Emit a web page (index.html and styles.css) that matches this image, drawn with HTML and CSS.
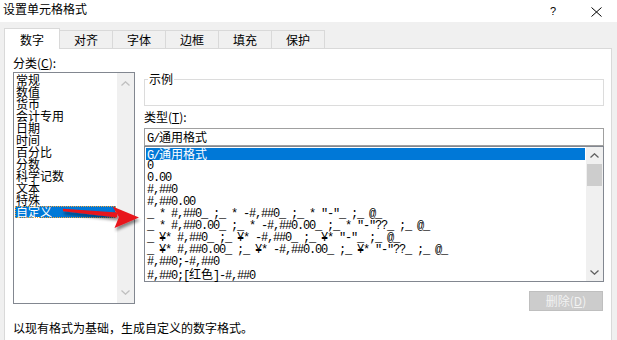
FILE: index.html
```html
<!DOCTYPE html>
<html lang="zh-CN">
<head>
<meta charset="utf-8">
<title>设置单元格格式</title>
<link rel="stylesheet" href="styles.css">
</head>
<body>
<div class="titlebar">
  <span class="title">设置单元格格式</span>
  <span class="help">?</span>
  <svg class="close" width="11" height="10" viewBox="0 0 11 10"><path d="M0.5 0.5L10.5 9.5M10.5 0.5L0.5 9.5" stroke="#000" stroke-width="1" fill="none"/></svg>
</div>
<div class="tabs">
  <div class="tab active">数字</div>
  <div class="tab">对齐</div>
  <div class="tab">字体</div>
  <div class="tab">边框</div>
  <div class="tab">填充</div>
  <div class="tab">保护</div>
</div>
<div class="panel">
  <div class="columns">
    <div class="left">
      <div class="label">分类(<u>C</u>):</div>
      <div class="listbox catlist">
        <ul class="items">
          <li>常规</li>
          <li>数值</li>
          <li>货币</li>
          <li>会计专用</li>
          <li>日期</li>
          <li>时间</li>
          <li>百分比</li>
          <li>分数</li>
          <li>科学记数</li>
          <li>文本</li>
          <li>特殊</li>
          <li class="sel focus">自定义</li>
        </ul>
        <div class="vscroll disabled">
          <svg class="chev" width="9" height="5" viewBox="0 0 9 5"><path d="M0.5 4.5L4.5 0.8L8.5 4.5" stroke="currentColor" stroke-width="1.3" fill="none"/></svg>
          <svg class="chev" width="9" height="5" viewBox="0 0 9 5"><path d="M0.5 0.5L4.5 4.2L8.5 0.5" stroke="currentColor" stroke-width="1.3" fill="none"/></svg>
        </div>
      </div>
    </div>
    <div class="right">
      <fieldset class="sample"><legend>示例</legend><div class="sample-body"></div></fieldset>
      <div class="label type-label">类型(<u>T</u>):</div>
      <div class="input"><span class="mono">G/</span>通用格式</div>
      <div class="listbox fmtlist">
        <ul class="items mono">
          <li class="sel">G/<span class="cjk">通用格式</span></li>
          <li>0</li>
          <li>0.00</li>
          <li>#,##0</li>
          <li>#,##0.00</li>
          <li>_ * #,##0_ ;_ * -#,##0_ ;_ * "-"_ ;_ @_</li>
          <li>_ * #,##0.00_ ;_ * -#,##0.00_ ;_ * "-"??_ ;_ @_</li>
          <li>_ ¥* #,##0_ ;_ ¥* -#,##0_ ;_ ¥* "-"_ ;_ @_</li>
          <li>_ ¥* #,##0.00_ ;_ ¥* -#,##0.00_ ;_ ¥* "-"??_ ;_ @_</li>
          <li>#,##0;-#,##0</li>
          <li>#,##0;[<span class="cjk">红色</span>]-#,##0</li>
        </ul>
        <div class="vscroll">
          <div class="arrowbox"><svg class="chev" width="9" height="5" viewBox="0 0 9 5"><path d="M0.5 4.5L4.5 0.8L8.5 4.5" stroke="currentColor" stroke-width="1.3" fill="none"/></svg></div>
          <div class="thumb"></div>
          <div class="track"></div>
          <div class="arrowbox"><svg class="chev" width="9" height="5" viewBox="0 0 9 5"><path d="M0.5 0.5L4.5 4.2L8.5 0.5" stroke="currentColor" stroke-width="1.3" fill="none"/></svg></div>
        </div>
      </div>
      <div class="btnrow"><button class="btn" disabled>删除(<u>D</u>)</button></div>
    </div>
  </div>
  <div class="hint">以现有格式为基础，生成自定义的数字格式。</div>
</div>
<svg class="redarrow" width="617" height="340" viewBox="0 0 617 340">
  <defs>
    <filter id="sh" x="-20%" y="-50%" width="140%" height="200%">
      <feGaussianBlur in="SourceAlpha" stdDeviation="1.6"/>
      <feOffset dx="1" dy="3" result="b"/>
      <feComponentTransfer><feFuncA type="linear" slope="0.45"/></feComponentTransfer>
      <feMerge><feMergeNode/><feMergeNode in="SourceGraphic"/></feMerge>
    </filter>
  </defs>
  <g filter="url(#sh)" fill="#e8141b">
    <polygon points="63,208.8 63,211.2 117,217.5 117.5,212.5"/>
    <polygon points="112.5,206.5 139,217.5 114.5,228 119,217"/>
  </g>
</svg>
</body>
</html>
```

FILE: styles.css
```css
* { box-sizing: border-box; }

body {
  margin: 0;
  width: 617px;
  height: 340px;
  overflow: hidden;
  background: #f0f0f0;
  font-family: "Noto Sans CJK SC", sans-serif;
  font-size: 12px;
  color: #000;
  position: relative;
}

.titlebar {
  height: 22px;
  background: #fff;
  display: flex;
  align-items: flex-start;
}
.title {
  flex: 1;
  margin: 3px 0 0 3px;
  line-height: 12px;
}
.help {
  font-family: "Liberation Sans", sans-serif;
  font-size: 11px;
  line-height: 11px;
  margin-top: 6px;
  width: 6px;
}
.close {
  margin: 7px 15px 0 35px;
}

.tabs {
  height: 26px;
  display: flex;
  align-items: flex-end;
  padding-left: 4px;
}
.tab {
  width: 54px;
  height: 18px;
  border: 1px solid #d9d9d9;
  border-bottom: none;
  margin-right: -1px;
  text-align: center;
  line-height: 14px;
  padding-top: 2px;
  background: #f0f0f0;
}
.tab.active {
  width: 56px;
  height: 21px;
  margin-bottom: -1px;
  background: #fff;
  position: relative;
  z-index: 1;
  padding-top: 4px;
}

.panel {
  margin-left: 4px;
  width: 608px;
  height: 300px;
  border: 1px solid #d9d9d9;
  background: #fff;
  padding: 7px 0 0 8px;
}

.columns {
  display: flex;
  align-items: flex-start;
  gap: 9px;
}
.left { width: 122px; }
.right { width: 460px; }

.label {
  line-height: 14px;
  height: 16px;
}
.type-label {
  margin-top: 4px;
  height: 16px;
}

.listbox {
  border: 1px solid #828790;
  display: flex;
  background: #fff;
}
.catlist { height: 232px; }
.fmtlist { height: 136px; }

.items {
  flex: 1;
  list-style: none;
  margin: 0;
  padding: 1px 1px 0 1px;
}
.items li {
  height: 12px;
  line-height: 12px;
  padding-left: 1px;
  white-space: pre;
}
.items li.sel {
  background: #0078d7;
  color: #fff;
}
.items li.focus {
  outline: 1px dotted #f2a33a;
  outline-offset: -1px;
}

.mono {
  font-family: "Liberation Mono", monospace;
  font-size: 12px;
  letter-spacing: -1.2px;
}
.cjk {
  font-family: "Noto Sans CJK SC", sans-serif;
  font-size: 12px;
  letter-spacing: 0;
}

.vscroll {
  width: 17px;
  background: #f0f0f0;
  display: flex;
  flex-direction: column;
  align-items: center;
  color: #606060;
}
.vscroll.disabled {
  justify-content: space-between;
  padding: 8px 0 8px;
  color: #bfbfbf;
}
.chev { display: block; }
.arrowbox {
  height: 17px;
  width: 100%;
  display: flex;
  align-items: center;
  justify-content: center;
}
.thumb {
  width: 15px;
  height: 22px;
  background: #cdcdcd;
}
.track { flex: 1; }

.sample {
  margin: 17px 0 0;
  padding: 0;
  border: 1px solid #dcdcdc;
  min-width: 0;
}
.sample legend {
  margin-left: 3px;
  padding: 0 1px;
  line-height: 12px;
  font-size: 12px;
}
.sample-body { height: 20px; }

.input {
  margin-top: 2px;
  height: 18px;
  border: 1px solid #a0a0a0;
  padding-left: 2px;
  line-height: 16px;
}

.btnrow {
  display: flex;
  justify-content: flex-end;
  margin-top: 9px;
  padding-right: 1px;
}
.btn {
  width: 74px;
  height: 20px;
  background: #cccccc;
  border: 1px solid #bfbfbf;
  color: #f2f2f2;
  font-family: "Noto Sans CJK SC", sans-serif;
  font-size: 12px;
  line-height: 16px;
  padding: 0;
}

.hint {
  margin-top: 10px;
  line-height: 14px;
}

.redarrow {
  position: absolute;
  left: 0;
  top: 0;
  pointer-events: none;
}
```
